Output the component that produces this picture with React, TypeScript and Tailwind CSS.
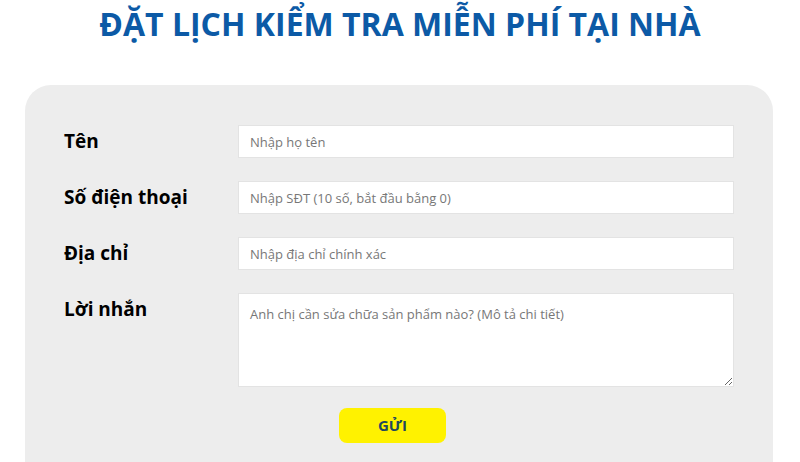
import React from "react";

export default function App() {
  const font = { fontFamily: '"Open Sans", "Noto Sans", sans-serif' };
  return (
    <div className="w-[800px] h-[462px] overflow-hidden bg-white" style={font}>
      <h1 className="pt-[2px] text-center text-[32px] font-bold leading-[44px] text-[#0c5aa6]">
        ĐẶT LỊCH KIỂM TRA MIỄN PHÍ TẠI NHÀ
      </h1>
      <div className="mt-[39px] mx-[25px] w-[748px] h-[400px] rounded-t-[26px] bg-[#ededed] pt-[40px] px-[39px]">
        <div className="grid grid-cols-[174px_1fr] gap-y-[23px]">
          <label className="h-[33px] flex items-center text-[19px] font-bold text-black">Tên</label>
          <input
            className="h-[33px] bg-white border border-[#e3e3e3] px-[11px] text-[13px] text-black placeholder:text-[#777] outline-none"
            placeholder="Nhập họ tên"
          />
          <label className="h-[33px] flex items-center text-[19px] font-bold text-black">Số điện thoại</label>
          <input
            className="h-[33px] bg-white border border-[#e3e3e3] px-[11px] text-[13px] text-black placeholder:text-[#777] outline-none"
            placeholder="Nhập SĐT (10 số, bắt đầu bằng 0)"
          />
          <label className="h-[33px] flex items-center text-[19px] font-bold text-black">Địa chỉ</label>
          <input
            className="h-[33px] bg-white border border-[#e3e3e3] px-[11px] text-[13px] text-black placeholder:text-[#777] outline-none"
            placeholder="Nhập địa chỉ chính xác"
          />
          <label className="h-[33px] flex items-center text-[19px] font-bold text-black">Lời nhắn</label>
          <textarea
            className="h-[94px] bg-white border border-[#e3e3e3] px-[11px] py-[10px] text-[13px] leading-[20px] text-black placeholder:text-[#777] outline-none"
            placeholder="Anh chị cần sửa chữa sản phẩm nào? (Mô tả chi tiết)"
          />
        </div>
        <div className="mt-[21px] pl-[275px]">
          <button className="w-[107px] h-[35px] rounded-[8px] bg-[#fff200] text-[15px] font-bold text-[#21475f]">
            GỬI
          </button>
        </div>
      </div>
    </div>
  );
}
